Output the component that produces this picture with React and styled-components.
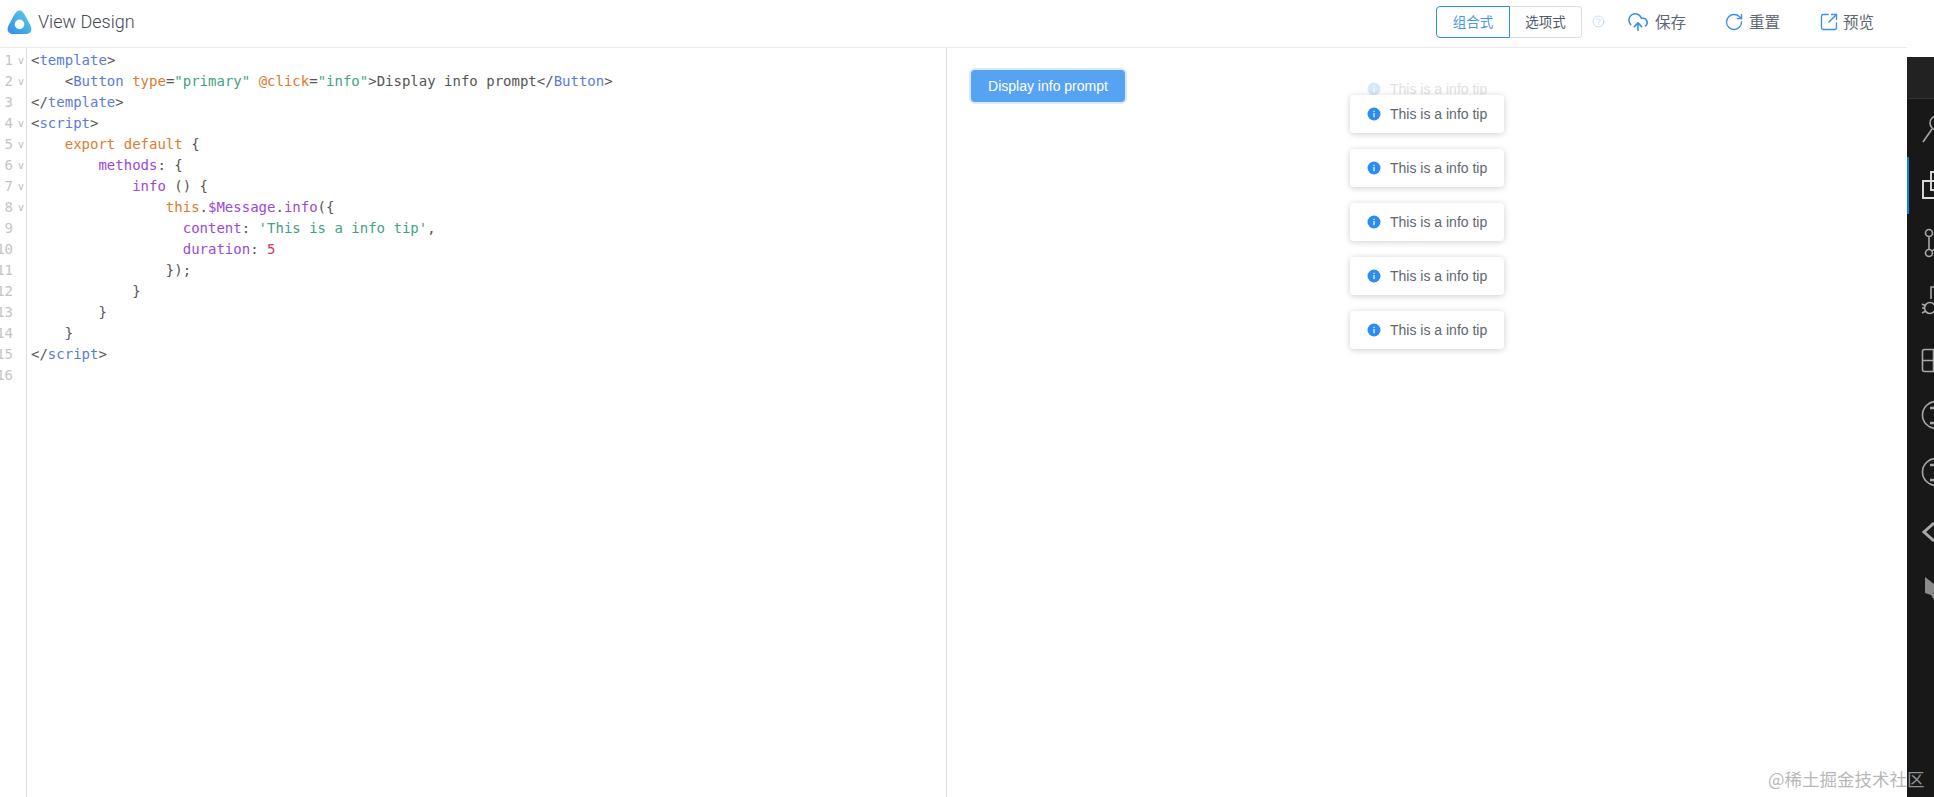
import React from "react";
import styled, { createGlobalStyle } from "styled-components";
import { CloudUpload, RotateCw, SquareArrowOutUpRight, CircleHelp } from "lucide-react";

const Global = createGlobalStyle`
  html, body { margin: 0; padding: 0; background: #fff; }
  body { font-family: "Liberation Sans", sans-serif; }
`;

const Page = styled.div`
  position: relative;
  display: flex;
  width: 1934px;
  height: 797px;
  overflow: hidden;
`;
const Workspace = styled.div`
  width: 1907px;
  display: flex;
  flex-direction: column;
`;
const Header = styled.header`
  height: 44px;
  flex: none;
  display: flex;
  align-items: center;
  padding: 0 33px 3px 7px;
  border-bottom: 1px solid #e8eaec;
`;
const LogoMark = styled.svg`
  width: 25px;
  height: 25px;
  flex: none;
`;
const Title = styled.div`
  margin: 0 0 2px 6px;
  font: 300 18px "Roboto", sans-serif;
  color: #3f4756;
  flex: 1;
`;
const Segment = styled.div`
  display: flex;
  height: 32px;
`;
const SegmentButton = styled.div`
  width: 74px;
  box-sizing: border-box;
  display: flex;
  align-items: center;
  justify-content: center;
  padding-bottom: 2px;
  font: 13.5px "Noto Sans CJK SC", sans-serif;
  color: ${p => (p.$active ? "#4a97e8" : "#515a6e")};
  border: 1px solid ${p => (p.$active ? "#2d8cf0" : "#dcdee2")};
  border-radius: ${p => (p.$active ? "4px 0 0 4px" : "0 4px 4px 0")};
  ${p => !p.$active && "border-left: 0; width: 72px;"}
`;
const Help = styled.span`
  display: flex;
  margin: 0 22px 2px 10px;
  color: #a9cdf3;
`;
const Action = styled.div`
  display: flex;
  align-items: center;
  gap: ${p => p.$gap}px;
  margin-right: ${p => p.$mr || 0}px;
  font: 15.5px "Noto Sans CJK SC", sans-serif;
  color: #5d6675;
  svg { color: #3a8fe6; flex: none; }
`;
const ActionLabel = styled.span`
  margin-bottom: 2px;
`;
const Panes = styled.div`
  flex: 1;
  display: flex;
  min-height: 0;
`;
const Editor = styled.div`
  width: 946px;
  flex: none;
  border-right: 1px solid #dcdee2;
  padding-top: 2px;
  font: 14px/21px "DejaVu Sans Mono", monospace;
  color: #555;
  position: relative;
  &::before {
    content: "";
    position: absolute;
    left: 26px;
    top: 0;
    bottom: 0;
    border-left: 1px solid #dcdee2;
  }
`;
const Line = styled.div`
  display: flex;
  height: 21px;
  white-space: pre;
`;
const LineNo = styled.span`
  width: 13px;
  flex: none;
  display: flex;
  justify-content: flex-end;
  overflow: hidden;
  color: #c4c4c4;
`;
const Fold = styled.span`
  width: 18px;
  flex: none;
  padding-left: 5px;
  box-sizing: border-box;
  font-size: 10px;
  color: #bbb;
`;
const Tag = styled.span`color: #5a7cd8;`;
const Attr = styled.span`color: #dd7a30;`;
const Str = styled.span`color: #45a085;`;
const Prop = styled.span`color: #9a4ad6;`;
const Num = styled.span`color: #e0305f;`;

const Preview = styled.div`
  flex: 1;
  padding: 22px 24px;
`;
const PrimaryButton = styled.button`
  display: block;
  width: 154px;
  height: 32px;
  border: 0;
  border-radius: 4px;
  background: #57a3f3;
  box-shadow: 0 0 0 2px rgba(45, 140, 240, 0.18);
  color: #fff;
  font: 14px "Liberation Sans", sans-serif;
  padding: 0;
`;
const MessageStack = styled.div`
  position: absolute;
  left: 1350px;
  top: 95px;
  display: flex;
  flex-direction: column;
  gap: 16px;
`;
const Message = styled.div`
  width: 154px;
  height: 38px;
  box-sizing: border-box;
  display: flex;
  align-items: center;
  gap: 9px;
  padding-left: 17px;
  background: #fff;
  border-radius: 4px;
  box-shadow: 0 1px 6px rgba(0, 0, 0, 0.2);
  font-size: 14px;
  color: #5f6672;
  position: relative;
`;
const FadingMessage = styled(Message)`
  position: absolute;
  top: -25px;
  left: 0;
  opacity: 0.2;
  box-shadow: none;
`;
const InfoDot = styled.svg`
  width: 14px;
  height: 14px;
  flex: none;
`;
const Strip = styled.aside`
  width: 27px;
  margin-top: 57px;
  background: #181818;
  display: flex;
  flex-direction: column;
  position: relative;
`;
const StripTitle = styled.div`
  height: 41px;
  margin-bottom: 1px;
  background: #222;
  border-bottom: 1px solid #333;
  flex: none;
`;
const ActivityItem = styled.div`
  height: 57px;
  flex: none;
  position: relative;
  ${p => p.$active && "box-shadow: inset 2px 0 0 #0a84d8;"}
  svg { display: block; }
`;
const Watermark = styled.div`
  position: absolute;
  left: 1768px;
  top: 767px;
  font: 17.5px/24px "Noto Sans CJK SC", sans-serif;
  color: rgba(170, 170, 170, 0.85);
  white-space: nowrap;
`;

const T = ({ c }) => <Tag>{c}</Tag>;
const code = [
  [true, <>{"<"}<T c="template" />{">"}</>],
  [true, <>{"    <"}<T c="Button" /> <Attr>type</Attr>=<Str>"primary"</Str> <Attr>@click</Attr>=<Str>"info"</Str>{">Display info prompt</"}<T c="Button" />{">"}</>],
  [false, <>{"</"}<T c="template" />{">"}</>],
  [true, <>{"<"}<T c="script" />{">"}</>],
  [true, <>{"    "}<Attr>export default</Attr>{" {"}</>],
  [true, <>{"        "}<Prop>methods</Prop>{": {"}</>],
  [true, <>{"            "}<Prop>info</Prop>{" () {"}</>],
  [true, <>{"                "}<Attr>this</Attr>.<Prop>$Message</Prop>.<Prop>info</Prop>{"({"}</>],
  [false, <>{"                  "}<Prop>content</Prop>: <Str>'This is a info tip'</Str>,</>],
  [false, <>{"                  "}<Prop>duration</Prop>: <Num>5</Num></>],
  [false, <>{"                });"}</>],
  [false, <>{"            }"}</>],
  [false, <>{"        }"}</>],
  [false, <>{"    }"}</>],
  [false, <>{"</"}<T c="script" />{">"}</>],
  [false, <>{" "}</>],
];

const Info = () => (
  <InfoDot viewBox="0 0 14 14">
    <circle cx="7" cy="7" r="6.5" fill="#2d8cf0" />
    <rect x="6.4" y="6" width="1.2" height="4.2" fill="#fff" />
    <rect x="6.4" y="3.8" width="1.2" height="1.2" fill="#fff" />
  </InfoDot>
);

const Tip = () => (<Message><Info />This is a info tip</Message>);

const Glyph = ({ children, stroke = "#a8a8a8" }) => (
  <svg width="27" height="57" viewBox="0 0 27 57" fill="none" stroke={stroke} strokeWidth="1.6">
    {children}
  </svg>
);

const activity = [
  <Glyph key="s"><circle cx="30" cy="23" r="7" /><path d="M16 42 L25 29" /></Glyph>,
  <Glyph key="f" stroke="#dcdcdc"><path d="M24 24 V15 H34 M30 24 H16 V41 H34" strokeWidth="1.9" /><path d="M24 24 V33 H34" strokeWidth="1.9" /></Glyph>,
  <Glyph key="g"><circle cx="22" cy="19" r="3.5" /><circle cx="22" cy="39" r="3.5" /><path d="M22 23 V35 M25 37 L30 33" /></Glyph>,
  <Glyph key="d"><path d="M24 28 V16 H30" /><circle cx="23" cy="37" r="5.5" /><path d="M15 33 L19 35 M15 37 H18 M15 42 L19 40 M27 34 L30 32 M28 38 H30" /></Glyph>,
  <Glyph key="e"><rect x="15.5" y="21.5" width="24" height="22" rx="2" /><path d="M15.5 32.5 H30 M26.5 21.5 V43.5" /></Glyph>,
  <Glyph key="i1"><circle cx="29" cy="30" r="13.5" /><path d="M23 23 H35 M29 23 V38 M23 38 H35" strokeWidth="2.6" /></Glyph>,
  <Glyph key="i2"><circle cx="29" cy="30" r="13.5" /><path d="M23 23 H35 M29 23 V38 M23 38 H35" strokeWidth="2.6" /></Glyph>,
  <Glyph key="c"><path d="M27 24 L17 33 L27 42" strokeWidth="3" /></Glyph>,
  <Glyph key="m"><path d="M18 21 L27 28 V44 L24 39 L18 37 Z" fill="#8a8a8a" stroke="none" /></Glyph>,
];

export default function App() {
  return (
    <Page>
      <Global />
      <Workspace>
        <Header>
          <LogoMark viewBox="0 0 26 26">
            <defs>
              <linearGradient id="lg" x1="0" y1="1" x2="1" y2="0">
                <stop offset="0" stopColor="#2d8cf0" />
                <stop offset="1" stopColor="#5fd0dc" />
              </linearGradient>
            </defs>
            <path
              fillRule="evenodd"
              fill="url(#lg)"
              d="M13 0.5 C15.5 0.5 17 2.5 18.5 5 L24.5 16 C26.5 20 25 25 20 25 H6 C1 25 -0.5 20 1.5 16 L7.5 5 C9 2.5 10.5 0.5 13 0.5 Z M13 10 A5 5 0 1 0 13 20 A5 5 0 1 0 13 10 Z"
            />
          </LogoMark>
          <Title>View Design</Title>
          <Segment>
            <SegmentButton $active>组合式</SegmentButton>
            <SegmentButton>选项式</SegmentButton>
          </Segment>
          <Help><CircleHelp size={13} strokeWidth={1.3} /></Help>
          <Action $gap={6} $mr={38}><CloudUpload size={22} strokeWidth={1.7} /><ActionLabel>保存</ActionLabel></Action>
          <Action $gap={5} $mr={39}><RotateCw size={20} strokeWidth={1.6} /><ActionLabel>重置</ActionLabel></Action>
          <Action $gap={4}><SquareArrowOutUpRight size={20} strokeWidth={1.6} /><ActionLabel>预览</ActionLabel></Action>
        </Header>
        <Panes>
          <Editor>
            {code.map(([fold, content], i) => (
              <Line key={i}>
                <LineNo>{i + 1}</LineNo>
                <Fold>{fold ? "v" : ""}</Fold>
                <span>{content}</span>
              </Line>
            ))}
          </Editor>
          <Preview>
            <PrimaryButton>Display info prompt</PrimaryButton>
          </Preview>
        </Panes>
      </Workspace>
      <Strip>
        <StripTitle />
        {activity.map((g, i) => (
          <ActivityItem key={i} $active={i === 1}>{g}</ActivityItem>
        ))}
      </Strip>
      <MessageStack>
        <FadingMessage><Info />This is a info tip</FadingMessage>
        <Tip /><Tip /><Tip /><Tip /><Tip />
      </MessageStack>
      <Watermark>@稀土掘金技术社区</Watermark>
    </Page>
  );
}
